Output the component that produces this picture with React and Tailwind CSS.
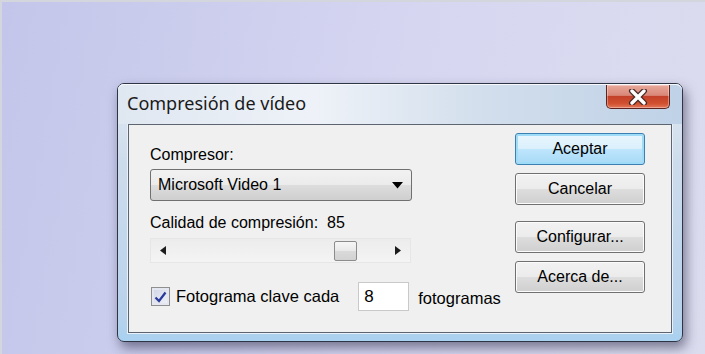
import React from "react";

function WinButton({ children, primary = false }) {
  return (
    <button
      className={`w-[130px] h-[32px] rounded-[3px] border text-[16px] text-black flex items-center justify-center
        ${
          primary
            ? "border-[#3c7fb1] bg-[linear-gradient(#eaf6fd,#d9f0fc_50%,#bee6fd_51%,#a7d9f5)] shadow-[inset_0_0_0_2px_#9fdcf8]"
            : "border-[#707070] bg-[linear-gradient(#f2f2f2,#ebebeb_50%,#dddddd_51%,#cfcfcf)] shadow-[inset_0_0_0_1px_#fcfcfc]"
        }`}
    >
      {children}
    </button>
  );
}

function CloseButton() {
  return (
    <div className="w-[64px] h-[24px] rounded-b-[5px] border border-t-0 border-[#5b2420] bg-[linear-gradient(#e8a89a,#d98878_45%,#c3412a_50%,#d0502f_80%,#e4775a)] flex items-center justify-center shadow-[inset_0_0_0_1px_rgba(255,255,255,0.35)]">
      <svg width="20" height="16" viewBox="0 0 20 16">
        <path d="M4 2 L16 14 M16 2 L4 14" stroke="#4a2a26" strokeWidth="6" strokeLinecap="round" />
        <path d="M4 2 L16 14 M16 2 L4 14" stroke="#ffffff" strokeWidth="3.4" strokeLinecap="round" />
      </svg>
    </div>
  );
}

export default function App() {
  return (
    <div
      className="w-[705px] h-[354px] overflow-hidden bg-[linear-gradient(100deg,#c3c6ea,#d6d6f1_55%,#dcdcef)] border-t-2 border-l-2 border-[#d4d6de] pl-[115px] pt-[81px]"
      style={{ fontFamily: '"Liberation Sans", Arial, sans-serif' }}
    >
      {/* window */}
      <div className="w-[566px] h-[259px] rounded-[7px] border border-[#2e3645] bg-[linear-gradient(180deg,#e2e9f2,#cddcec_30%,#b8d2ec_90%,#a9d1f0)] shadow-[3px_6px_12px_rgba(40,40,70,0.55)] flex flex-col">
        {/* title bar */}
        <div className="relative h-[40px] flex items-start justify-between rounded-t-[6px] bg-[linear-gradient(90deg,#dfe7f1,#eef2f8_35%,#d2deec_65%,#bfd2e7)] shadow-[inset_0_1px_0_#f7f9fc]">
          <span
            className="pl-[9px] pt-[8px] text-[18px] leading-[22px] text-[#1a1a1a]"
            style={{ fontFamily: '"Noto Sans", "Open Sans", sans-serif' }}
          >
            Compresión de vídeo
          </span>
          <div className="mr-[12px] mt-[1px]">
            <CloseButton />
          </div>
        </div>
        {/* client area */}
        <div className="mx-[10px] h-[209px] border border-[#5d6570] bg-[#f0f0f0] flex justify-between pl-[21px] pr-[26px] shadow-[0_0_0_1px_#e8f1f9]">
          <div className="flex flex-col pt-[20px] text-[16px] text-black">
            <span className="leading-[20px]">Compresor:</span>
            <div className="mt-[4px] w-[262px] h-[32px] rounded-[3px] border border-[#707070] bg-[linear-gradient(#f2f2f2,#ebebeb_50%,#dddddd_51%,#cfcfcf)] flex items-center justify-between pl-[7px] pr-[8px]">
              <span>Microsoft Video 1</span>
              <svg width="11" height="7" viewBox="0 0 11 7">
                <path d="M0 0 H11 L5.5 6.5 Z" fill="#000" />
              </svg>
            </div>
            <span className="mt-[12px] leading-[20px]">
              Calidad de compresión:&nbsp; 85
            </span>
            <div className="mt-[5px] w-[261px] h-[25px] border border-[#e6e6e6] bg-[linear-gradient(#ececec,#f4f4f4)] flex items-center justify-between pl-[9px] pr-[9px]">
              <svg width="6" height="9" viewBox="0 0 6 9">
                <path d="M6 0 V9 L0 4.5 Z" fill="#1c1c1c" />
              </svg>
              <div className="flex items-center gap-[38px]">
                <div className="w-[23px] h-[20px] rounded-[2px] border border-[#8c8c8c] bg-[linear-gradient(#f6f6f6,#e9e9e9_50%,#dadada_51%,#d2d2d2)]" />
                <svg width="6" height="9" viewBox="0 0 6 9">
                  <path d="M0 0 V9 L6 4.5 Z" fill="#1c1c1c" />
                </svg>
              </div>
            </div>
            <div className="mt-[19px] flex items-center">
              <div className="ml-[1px] w-[19px] h-[19px] border border-[#8f8f8f] bg-[linear-gradient(135deg,#cfd3e6,#f2f3f8)] flex items-center justify-center shadow-[inset_0_0_0_2px_#e4e6f0]">
                <svg width="13" height="12" viewBox="0 0 13 12">
                  <path d="M1.5 6.5 L5 10 L11.5 1.5" stroke="#2a3a9c" strokeWidth="2.2" fill="none" />
                </svg>
              </div>
              <span className="ml-[6px] text-[16.5px]">Fotograma clave cada</span>
              <div className="ml-[19px] w-[51px] h-[29px] border border-[#c9c9c9] bg-white flex items-center pl-[5px] text-[17px]">
                8
              </div>
              <span className="ml-[9px] mt-[4px] text-[16.5px]">fotogramas</span>
            </div>
          </div>
          <div className="flex flex-col pt-[8px]">
            <WinButton primary>Aceptar</WinButton>
            <div className="mt-[8px]">
              <WinButton>Cancelar</WinButton>
            </div>
            <div className="mt-[16px]">
              <WinButton>Configurar...</WinButton>
            </div>
            <div className="mt-[8px]">
              <WinButton>Acerca de...</WinButton>
            </div>
          </div>
        </div>
      </div>
    </div>
  );
}
